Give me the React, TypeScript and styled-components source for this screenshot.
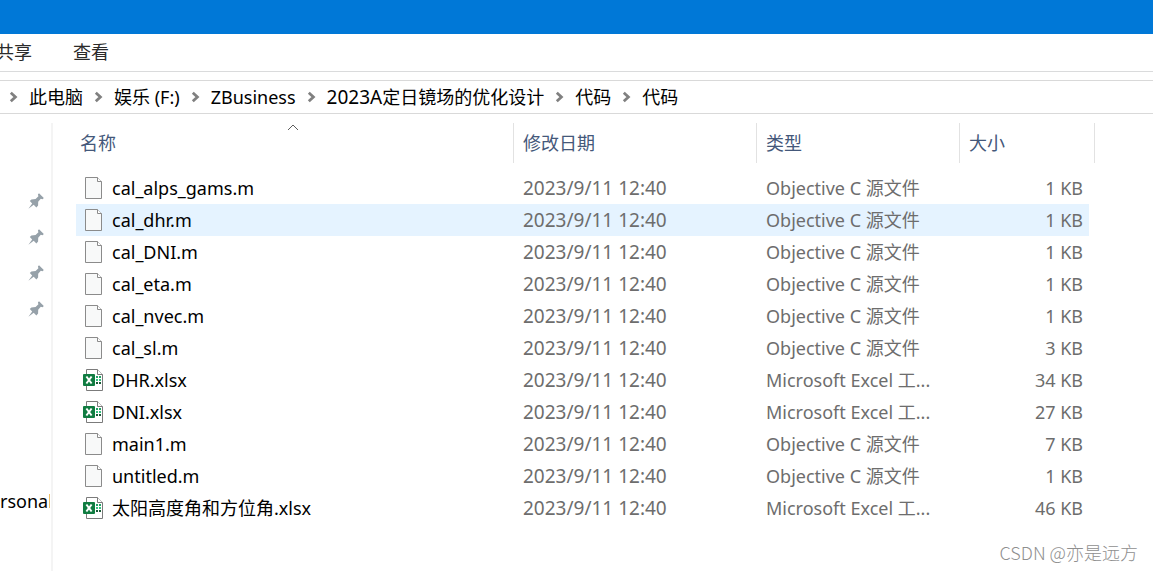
import React from 'react';
import styled, { createGlobalStyle } from 'styled-components';

const GlobalStyle = createGlobalStyle`
  * { box-sizing: border-box; }
  body {
    margin: 0;
    background: #fff;
    color: #000;
    font: 18px/24px "Noto Sans", "Noto Sans CJK SC", sans-serif;
    overflow: hidden;
  }
  button { font: inherit; color: inherit; background: none; border: 0; padding: 0; cursor: pointer; }
`;

const Window = styled.div`
  position: relative;
  display: flex;
  flex-direction: column;
  min-height: 100vh;
  overflow: hidden;
`;

const TitleBar = styled.header`
  height: 34px;
  background: #0078d7;
`;

const RibbonTabs = styled.nav`
  display: flex;
  align-items: center;
  gap: 41px;
  height: 38px;
  margin-bottom: 8px;
  padding-bottom: 2px;
  border-bottom: 1px solid #dadbdc;
  color: #2b2b2b;
`;

const RibbonTab = styled.button<{ $cut?: boolean }>`
  margin-left: ${(p) => (p.$cut ? '-4px' : '0')};
`;

const AddressBar = styled.nav`
  height: 34px;
  border: solid #d9d9d9;
  border-width: 1px 0;
`;

const Crumbs = styled.ol`
  display: flex;
  align-items: center;
  height: 32px;
  margin: 0;
  padding: 0 0 0 9px;
  list-style: none;
  white-space: nowrap;
`;

const Crumb = styled.li`
  display: flex;
  align-items: center;
  gap: 11px;
  padding-right: 11px;
`;

const Digits = styled.span`
  font-size: 19px;
`;

const Body = styled.div`
  display: flex;
  flex: 1;
  padding-top: 9px;
`;

const NavPane = styled.aside`
  flex: none;
  width: 53px;
  padding-top: 60px;
  border-right: 2px solid #f4f4f4;
`;

const PinList = styled.ul`
  margin: 0 0 158px;
  padding: 0 7px 0 0;
  list-style: none;
`;

const PinItem = styled.li`
  display: flex;
  align-items: center;
  justify-content: flex-end;
  height: 36px;
`;

const NavLabel = styled.div`
  width: 50px;
  height: 32px;
  line-height: 32px;
  overflow: hidden;
  white-space: nowrap;
`;

const Main = styled.main`
  flex: 1;
  min-width: 0;
  padding: 0 58px 0 23px;
`;

const FileTable = styled.table`
  width: 100%;
  table-layout: fixed;
  border-collapse: separate;
  border-spacing: 0;
`;

const Col = styled.col<{ $w?: number }>`
  width: ${(p) => (p.$w ? `${p.$w}px` : 'auto')};
`;

const HeadCell = styled.th`
  position: relative;
  height: 40px;
  padding: 0 0 0 ${(p) => (p['aria-sort'] ? '4px' : '9px')};
  border-right: 1px solid #e2e2e2;
  color: #44587a;
  font-weight: 400;
  text-align: left;
`;

const SortMark = styled.svg`
  position: absolute;
  top: 0;
  left: 50%;
  margin-left: -8px;
`;

const Rows = styled.tbody`
  &::before {
    content: '';
    display: block;
    height: 9px;
  }
`;

const Row = styled.tr<{ $hot?: boolean }>`
  & > td { background-color: ${(p) => (p.$hot ? '#e5f3ff' : 'transparent')}; }
`;

const Cell = styled.td`
  height: 32px;
  padding: 0 9px;
  color: #6d6d6d;
  white-space: nowrap;
  overflow: hidden;
`;

const NameCell = styled(Cell)`
  padding-left: 7px;
  color: #000;
`;

const FileName = styled.div`
  display: flex;
  align-items: center;
  gap: 9px;
`;

const SizeCell = styled(Cell)`
  padding-right: 6px;
  border-right: 6px solid transparent;
  background-clip: padding-box;
  text-align: right;
`;

const Watermark = styled.div`
  position: absolute;
  right: 15px;
  bottom: 7px;
  color: #8f8f8f;
  font-family: "Noto Sans CJK SC", sans-serif;
  font-weight: 300;
`;

const Chevron = () => (
  <svg width="9" height="12" viewBox="0 0 9 12" aria-hidden="true">
    <path d="M1.8 1.8 6.4 6l-4.6 4.2" fill="none" stroke="#808080" strokeWidth="2.8" />
  </svg>
);

const Pin = () => (
  <svg width="16" height="16" viewBox="0 0 16 16" aria-hidden="true">
    <path
      d="M.4 15.8 4.2 10.4 1.8 8l1.6-1.6 4.2-.4 2.8-2.8-.5-1.8L11 .3 15.8 5l-1.2 1.2-1.8-.4-2.6 3-.1 3.6-1.7 2.1-2.7-2.7z"
      fill="#96a1a9"
    />
  </svg>
);

const PageIcon = () => (
  <svg width="20" height="24" viewBox="0 0 20 24" aria-hidden="true">
    <path d="M2.5 1.5h12l4 4v17h-16z" fill="#f8f9f9" stroke="#8b8b8b" />
    <path d="M14.5 1.5v4h4" fill="#fff" stroke="#8b8b8b" />
  </svg>
);

const ExcelIcon = () => (
  <svg width="20" height="24" viewBox="0 0 20 24" aria-hidden="true">
    <path d="M3.5 1.5h11l5 5v16h-16z" fill="#fff" stroke="#7b7b7b" />
    <path d="M14.5 1.5v5h5" fill="#fff" stroke="#7b7b7b" />
    <path d="M13 8h2v2h-2zM16 8h2v2h-2z" fill="#21a366" />
    <path d="M13 11h2v2h-2zM16 11h2v2h-2z" fill="#33c481" />
    <path d="M13 14h2v2h-2zM16 14h2v2h-2z" fill="#185c37" />
    <rect y="6" width="12" height="12" rx="1" fill="#107c41" />
    <path d="M3.4 8.5 8.6 15.5M8.6 8.5 3.4 15.5" stroke="#fff" strokeWidth="2" />
  </svg>
);

const crumbs: { lead?: string; text: string }[] = [
  { text: '此电脑' },
  { text: '娱乐 (F:)' },
  { text: 'ZBusiness' },
  { lead: '2023A', text: '定日镜场的优化设计' },
  { text: '代码' },
  { text: '代码' },
];

const OBJC = 'Objective C 源文件';
const EXCEL = 'Microsoft Excel 工...';

const files = [
  { name: 'cal_alps_gams.m', type: OBJC, size: '1 KB' },
  { name: 'cal_dhr.m', type: OBJC, size: '1 KB', hot: true },
  { name: 'cal_DNI.m', type: OBJC, size: '1 KB' },
  { name: 'cal_eta.m', type: OBJC, size: '1 KB' },
  { name: 'cal_nvec.m', type: OBJC, size: '1 KB' },
  { name: 'cal_sl.m', type: OBJC, size: '3 KB' },
  { name: 'DHR.xlsx', type: EXCEL, size: '34 KB' },
  { name: 'DNI.xlsx', type: EXCEL, size: '27 KB' },
  { name: 'main1.m', type: OBJC, size: '7 KB' },
  { name: 'untitled.m', type: OBJC, size: '1 KB' },
  { name: '太阳高度角和方位角.xlsx', type: EXCEL, size: '46 KB' },
];

export default function App() {
  return (
    <>
      <GlobalStyle />
      <Window>
        <TitleBar />
        <RibbonTabs>
          <RibbonTab $cut>共享</RibbonTab>
          <RibbonTab>查看</RibbonTab>
        </RibbonTabs>
        <AddressBar>
          <Crumbs>
            {crumbs.map((c, i) => (
              <Crumb key={i}>
                <Chevron />
                <button>
                  {c.lead && <Digits>{c.lead}</Digits>}
                  {c.text}
                </button>
              </Crumb>
            ))}
          </Crumbs>
        </AddressBar>
        <Body>
          <NavPane>
            <PinList>
              {[0, 1, 2, 3].map((i) => (
                <PinItem key={i}>
                  <Pin />
                </PinItem>
              ))}
            </PinList>
            <NavLabel>rsonal</NavLabel>
          </NavPane>
          <Main>
            <FileTable>
              <colgroup>
                <Col />
                <Col $w={243} />
                <Col $w={203} />
                <Col $w={135} />
              </colgroup>
              <thead>
                <tr>
                  <HeadCell aria-sort="ascending">
                    <button>名称</button>
                    <SortMark width="12" height="8" viewBox="0 0 12 8" aria-hidden="true">
                      <path d="M1 7 6 2l5 5" fill="none" stroke="#5c5c5c" />
                    </SortMark>
                  </HeadCell>
                  <HeadCell><button>修改日期</button></HeadCell>
                  <HeadCell><button>类型</button></HeadCell>
                  <HeadCell><button>大小</button></HeadCell>
                </tr>
              </thead>
              <Rows>
                {files.map((f) => (
                  <Row key={f.name} $hot={f.hot}>
                    <NameCell>
                      <FileName>
                        {f.type === EXCEL ? <ExcelIcon /> : <PageIcon />}
                        {f.name}
                      </FileName>
                    </NameCell>
                    <Cell><Digits>2023/9/11 12:40</Digits></Cell>
                    <Cell>{f.type}</Cell>
                    <SizeCell>{f.size}</SizeCell>
                  </Row>
                ))}
              </Rows>
            </FileTable>
          </Main>
        </Body>
        <Watermark>CSDN @亦是远方</Watermark>
      </Window>
    </>
  );
}
